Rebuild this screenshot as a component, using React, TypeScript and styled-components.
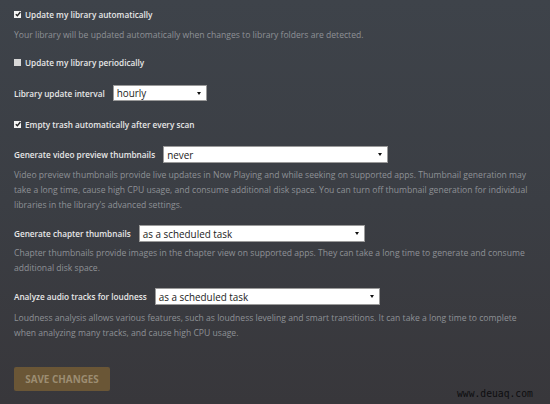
import React from "react";
import styled, { createGlobalStyle } from "styled-components";

const Global = createGlobalStyle`
  html, body { margin: 0; padding: 0; }
  body {
    width: 550px;
    height: 404px;
    overflow: hidden;
    background: linear-gradient(to bottom, #3e434a 0%, #3b3e44 50%, #38373b 100%);
    font-family: "Open Sans", "Noto Sans", sans-serif;
  }
`;

const Page = styled.main`
  position: relative;
  width: 550px;
  height: 404px;
  box-sizing: border-box;
  padding: 6px 0 0 14px;
  display: flex;
  flex-direction: column;
`;

const Block = styled.div<{ $mt?: number }>`
  margin-top: ${(p) => p.$mt ?? 0}px;
`;

const CheckRow = styled.label`
  display: flex;
  align-items: center;
  gap: 4px;
  height: 16px;
  color: #e8e8e8;
  font-size: 8.2px;
  font-weight: 600;
`;

const Box = styled.span<{ $checked?: boolean }>`
  width: 7px;
  height: 7px;
  background: ${(p) => (p.$checked ? "#f4f4f4" : "#d8d8d8")};
  display: inline-flex;
  align-items: center;
  justify-content: center;
  flex: none;
`;

const Desc = styled.p`
  margin: 0;
  color: #8e9196;
  font-size: 8.6px;
  line-height: 15px;
  white-space: nowrap;
`;

const FieldRow = styled.div<{ $h?: number }>`
  display: flex;
  align-items: center;
  gap: 8px;
  height: ${(p) => p.$h ?? 17}px;
`;

const Label = styled.span`
  color: #e8e8e8;
  font-size: 8.2px;
  font-weight: 600;
`;

const Select = styled.div<{ $w: number }>`
  width: ${(p) => p.$w}px;
  height: 100%;
  box-sizing: border-box;
  background: #ffffff;
  border: 1px solid #9a9a9a;
  display: flex;
  align-items: center;
  justify-content: space-between;
  padding: 0 5px 0 3px;
  color: #222;
  font-size: 9.9px;
`;

const Arrow = styled.span`
  width: 0;
  height: 0;
  border-left: 2.5px solid transparent;
  border-right: 2.5px solid transparent;
  border-top: 3.5px solid #111;
`;

const SaveButton = styled.button`
  width: 96px;
  height: 24px;
  border: none;
  border-radius: 2px;
  background: #6a5636;
  color: #9c8d72;
  font-family: "Open Sans", "Noto Sans", sans-serif;
  font-weight: 700;
  font-size: 9.9px;
  padding: 0;
`;

const Watermark = styled.span`
  position: absolute;
  left: 457px;
  top: 388px;
  font-family: "DejaVu Sans Mono", "Liberation Mono", monospace;
  font-size: 9.7px;
  color: #0e0e10;
`;

const Check = () => (
  <svg width="6" height="6" viewBox="0 0 6 6">
    <path d="M0.8 3.2 L2.4 4.8 L5.4 1" stroke="#222" strokeWidth="1.4" fill="none" />
  </svg>
);

export default function App() {
  return (
    <>
      <Global />
      <Page>
        <CheckRow>
          <Box $checked>
            <Check />
          </Box>
          Update my library automatically
        </CheckRow>
        <Block $mt={5.5}>
          <Desc>Your library will be updated automatically when changes to library folders are detected.</Desc>
        </Block>
        <Block $mt={11.5}>
          <CheckRow>
            <Box />
            Update my library periodically
          </CheckRow>
        </Block>
        <Block $mt={15}>
          <FieldRow $h={16}>
            <Label>Library update interval</Label>
            <Select $w={94}>
              hourly
              <Arrow />
            </Select>
          </FieldRow>
        </Block>
        <Block $mt={15}>
          <CheckRow>
            <Box $checked>
              <Check />
            </Box>
            Empty trash automatically after every scan
          </CheckRow>
        </Block>
        <Block $mt={14}>
          <FieldRow>
            <Label>Generate video preview thumbnails</Label>
            <Select $w={225}>
              never
              <Arrow />
            </Select>
          </FieldRow>
        </Block>
        <Block $mt={4.5}>
          <Desc>
            Video preview thumbnails provide live updates in Now Playing and while seeking on supported apps. Thumbnail generation may
            <br />
            take a long time, cause high CPU usage, and consume additional disk space. You can turn off thumbnail generation for individual
            <br />
            libraries in the library's advanced settings.
          </Desc>
        </Block>
        <Block $mt={12.5}>
          <FieldRow>
            <Label>Generate chapter thumbnails</Label>
            <Select $w={226}>
              as a scheduled task
              <Arrow />
            </Select>
          </FieldRow>
        </Block>
        <Block $mt={3.5}>
          <Desc>
            Chapter thumbnails provide images in the chapter view on supported apps. They can take a long time to generate and consume
            <br />
            additional disk space.
          </Desc>
        </Block>
        <Block $mt={12.5}>
          <FieldRow>
            <Label>Analyze audio tracks for loudness</Label>
            <Select $w={225}>
              as a scheduled task
              <Arrow />
            </Select>
          </FieldRow>
        </Block>
        <Block $mt={5.5}>
          <Desc>
            Loudness analysis allows various features, such as loudness leveling and smart transitions. It can take a long time to complete
            <br />
            when analyzing many tracks, and cause high CPU usage.
          </Desc>
        </Block>
        <Block $mt={25.5}>
          <SaveButton>SAVE CHANGES</SaveButton>
        </Block>
        <Watermark>www.deuaq.com</Watermark>
      </Page>
    </>
  );
}
